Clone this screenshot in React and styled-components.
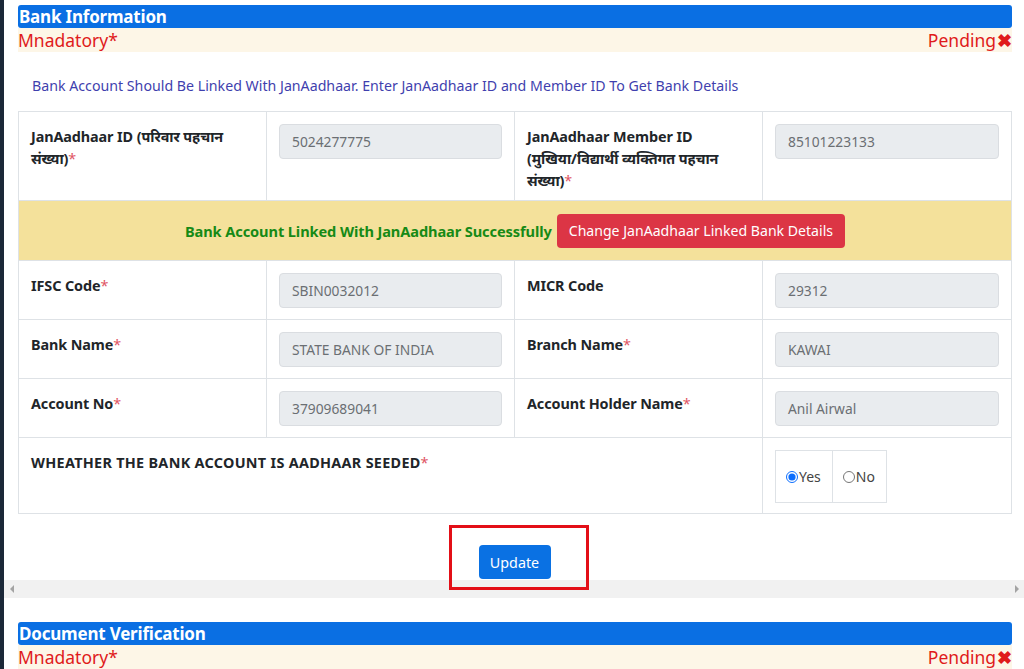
import React from "react";
import styled, { createGlobalStyle } from "styled-components";

const Global = createGlobalStyle`
  html, body { margin: 0; padding: 0; background: #fff; }
  body { font-family: "Noto Sans", "Open Sans", sans-serif; font-size: 14px; color: #212529; }
  * { box-sizing: border-box; }
`;

const Page = styled.div`
  display: flex;
  width: 1024px;
  height: 669px;
  overflow: hidden;
`;

const Strip = styled.div`
  width: 4px;
  flex: none;
  background: #1b2838;
`;

const Main = styled.div`
  flex: 1;
  display: flex;
  flex-direction: column;
  padding-top: 5px;
  & > * { flex-shrink: 0; }
`;

const Section = styled.div`
  padding: 0 13px 0 14px;
`;

const TitleBar = styled.div`
  background: #0a6fe3;
  color: #fff;
  font-weight: 700;
  font-size: 17px;
  line-height: 23px;
  height: 23px;
  padding-left: 1px;
  border-radius: 3px;
  letter-spacing: -0.2px;
`;

const StatusRow = styled.div`
  display: flex;
  justify-content: space-between;
  align-items: center;
  background: #fdf6e7;
  color: #e01b1b;
  font-size: 17.5px;
  height: 24px;
  line-height: 24px;
`;

const Cross = styled.span`
  font-weight: 700;
  font-size: 18px;
  margin-left: 1px;
`;

const Info = styled.div`
  color: #3f3fae;
  font-size: 14.2px;
  padding: 24px 0 0 14px;
  height: 59px;
  line-height: 20px;
`;

const Table = styled.table`
  width: 993px;
  border-collapse: collapse;
  table-layout: fixed;
`;

const Td = styled.td`
  border: 1px solid #dee2e6;
  padding: 12px 12px 10px;
  vertical-align: top;
  height: ${(p) => p.$h || 59}px;
`;

const Label = styled.div`
  font-weight: 700;
  font-size: 14.4px;
  line-height: 22px;
  padding-top: 2px;
  margin-bottom: ${(p) => (p.$tight ? -2 : 0)}px;
  letter-spacing: ${(p) => (p.$caps ? "0.3px" : "-0.1px")};
`;

const Star = styled.span`
  color: #e05563;
  font-weight: 400;
  letter-spacing: 0;
`;

const Input = styled.div`
  height: 35px;
  border: 1px solid #dadde1;
  border-radius: 4px;
  background: #e9ecef;
  color: #6b6f73;
  font-size: 13.8px;
  line-height: 33px;
  padding: 0 12px;
`;

const BannerTd = styled.td`
  border: 1px solid #dee2e6;
  background: #f4e19b;
  padding: 12px;
  height: 60px;
  text-align: center;
`;

const Success = styled.span`
  color: #168a16;
  font-weight: 700;
  font-size: 14.6px;
  letter-spacing: -0.1px;
  vertical-align: middle;
`;

const DangerButton = styled.button`
  font-family: inherit;
  background: #dc3545;
  color: #fff;
  border: none;
  border-radius: 4px;
  height: 34px;
  padding: 0 12px;
  font-size: 14.1px;
  margin-left: 5px;
  vertical-align: middle;
`;

const RadioBox = styled.div`
  display: inline-flex;
  border: 1px solid #dee2e6;
  height: 53px;
`;

const RadioCell = styled.label`
  display: flex;
  align-items: center;
  padding: 0 11px 0 10px;
  font-size: 14px;
  color: #444;
  & + & { border-left: 1px solid #dee2e6; }
  input {
    margin: 0 1px 0 0;
    width: 12px;
    height: 12px;
    accent-color: #0d6efd;
  }
`;

const Scroller = styled.div`
  display: flex;
  flex-direction: column;
`;

const UpdateArea = styled.div`
  display: flex;
  justify-content: center;
  padding: 31px 0 1px 0;
`;

const Marked = styled.div`
  position: relative;
  &::after {
    content: "";
    position: absolute;
    left: -30px;
    right: -38px;
    top: -20px;
    bottom: -11px;
    border: 3px solid #e30f17;
    z-index: 2;
    pointer-events: none;
  }
`;

const PrimaryButton = styled.button`
  font-family: inherit;
  background: #0a71e3;
  color: #fff;
  border: none;
  border-radius: 4px;
  height: 34px;
  width: 72px;
  font-size: 14.3px;
`;

const ScrollBar = styled.div`
  height: 18px;
  background: #f1f1f1;
  display: flex;
  justify-content: space-between;
  align-items: center;
  padding: 0 6px 0 6px;
`;

const Arrow = styled.span`
  width: 0;
  height: 0;
  border-top: 4px solid transparent;
  border-bottom: 4px solid transparent;
  ${(p) =>
    p.$dir === "left"
      ? "border-right: 4px solid #a3a3a3;"
      : "border-left: 4px solid #a3a3a3;"}
`;

const Spacer = styled.div`
  height: 24px;
`;

function Header({ title }) {
  return (
    <>
      <TitleBar>{title}</TitleBar>
      <StatusRow>
        <span>Mnadatory*</span>
        <span>
          Pending<Cross>✖</Cross>
        </span>
      </StatusRow>
    </>
  );
}

function Field({ label, required, value }) {
  return (
    <>
      <Td>
        <Label>
          {label}
          {required && <Star>*</Star>}
        </Label>
      </Td>
      <Td>
        <Input>{value}</Input>
      </Td>
    </>
  );
}

export default function App() {
  return (
    <>
      <Global />
      <Page>
        <Strip />
        <Main>
          <Scroller>
            <Section>
              <Header title="Bank Information" />
              <Info>
                Bank Account Should Be Linked With JanAadhaar. Enter JanAadhaar ID and Member ID To Get Bank Details
              </Info>
              <Table>
                <colgroup>
                  <col style={{ width: 248 }} />
                  <col style={{ width: 248 }} />
                  <col style={{ width: 248 }} />
                  <col style={{ width: 249 }} />
                </colgroup>
                <tbody>
                  <tr>
                    <Td $h={88}>
                      <Label $tight>
                        JanAadhaar ID (परिवार पहचान संख्या)<Star>*</Star>
                      </Label>
                    </Td>
                    <Td $h={88}>
                      <Input>5024277775</Input>
                    </Td>
                    <Td $h={88}>
                      <Label $tight>
                        JanAadhaar Member ID<br />
                        (मुखिया/विद्यार्थी व्यक्तिगत पहचान संख्या)<Star>*</Star>
                      </Label>
                    </Td>
                    <Td $h={88}>
                      <Input>85101223133</Input>
                    </Td>
                  </tr>
                  <tr>
                    <BannerTd colSpan={4}>
                      <Success>Bank Account Linked With JanAadhaar Successfully</Success>
                      <DangerButton>Change JanAadhaar Linked Bank Details</DangerButton>
                    </BannerTd>
                  </tr>
                  <tr>
                    <Field label="IFSC Code" required value="SBIN0032012" />
                    <Field label="MICR Code" value="29312" />
                  </tr>
                  <tr>
                    <Field label="Bank Name" required value="STATE BANK OF INDIA" />
                    <Field label="Branch Name" required value="KAWAI" />
                  </tr>
                  <tr>
                    <Field label="Account No" required value="37909689041" />
                    <Field label="Account Holder Name" required value="Anil Airwal" />
                  </tr>
                  <tr>
                    <Td colSpan={3} $h={76}>
                      <Label $caps>
                        WHEATHER THE BANK ACCOUNT IS AADHAAR SEEDED<Star>*</Star>
                      </Label>
                    </Td>
                    <Td $h={76}>
                      <RadioBox>
                        <RadioCell>
                          <input type="radio" name="seeded" defaultChecked />
                          Yes
                        </RadioCell>
                        <RadioCell>
                          <input type="radio" name="seeded" />
                          No
                        </RadioCell>
                      </RadioBox>
                    </Td>
                  </tr>
                </tbody>
              </Table>
            </Section>
            <UpdateArea>
              <Marked>
                <PrimaryButton>Update</PrimaryButton>
              </Marked>
            </UpdateArea>
            <ScrollBar>
              <Arrow $dir="left" />
              <Arrow $dir="right" />
            </ScrollBar>
          </Scroller>
          <Spacer />
          <Section>
            <Header title="Document Verification" />
          </Section>
        </Main>
      </Page>
    </>
  );
}
